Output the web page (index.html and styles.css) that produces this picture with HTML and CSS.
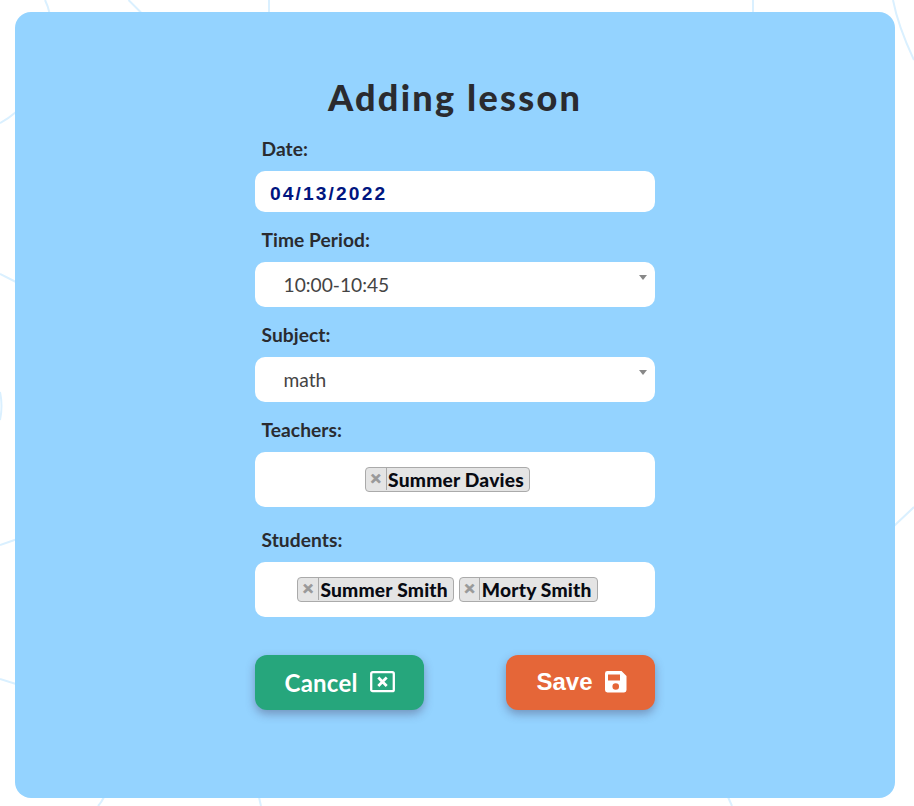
FILE: index.html
```html
<!DOCTYPE html>
<html lang="en">
<head>
<meta charset="utf-8">
<title>Adding lesson</title>
<link rel="stylesheet" href="styles.css">
</head>
<body>
<svg class="backdrop" viewBox="0 0 914 806" aria-hidden="true">
  <path d="M45 0Q48 6 49.500 13M128.500 0L141 12.500M269 0V13M753 0V13M893 0Q898 26 914 60M0 123Q8 119 16 112M0 274L16 282M0 392Q3 406 0 420M0 545L16 539.500M0 679L16 684M98 806Q101 803 104 797M259 797Q260 802 261 806M728 797L732 806M894 526L914 507"/>
</svg>
<main class="card">
  <form class="lesson-form">
    <h1 class="title">Adding lesson</h1>
    <div class="label">Date:</div>
    <div class="field date">04/13/2022</div>
    <div class="label">Time Period:</div>
    <div class="field select"><span>10:00-10:45</span><i class="arrow"></i></div>
    <div class="label">Subject:</div>
    <div class="field select"><span>math</span><i class="arrow"></i></div>
    <div class="label">Teachers:</div>
    <div class="field tags">
      <span class="tag"><b class="remove">×</b><span class="name">Summer Davies</span></span>
    </div>
    <div class="label label-students">Students:</div>
    <div class="field tags tags-students">
      <span class="tag"><b class="remove">×</b><span class="name">Summer Smith</span></span>
      <span class="tag"><b class="remove">×</b><span class="name">Morty Smith</span></span>
    </div>
    <div class="actions">
      <button type="button" class="button cancel"><span>Cancel</span>
        <svg width="25" height="22" viewBox="0 0 25 22"><rect x="1.200" y="1.200" width="22.600" height="19" rx="1.500" fill="none" stroke="#fff" stroke-width="2.300"/><path d="M8.300 6.500L16.700 14.900M16.700 6.500L8.300 14.900" fill="none" stroke="#fff" stroke-width="2.800"/></svg>
      </button>
      <button type="button" class="button save"><span>Save</span>
        <svg width="22" height="22" viewBox="0 0 22 22"><path fill="#fff" fill-rule="evenodd" d="M2.400 0H16.500L21.500 5V19.100Q21.500 21.500 19.100 21.500H2.400Q0 21.500 0 19.100V2.400Q0 0 2.400 0ZM3 3.500V9.500H15V3.500ZM10.750 12.200A3.300 3.300 0 1 0 10.750 18.800A3.300 3.300 0 1 0 10.750 12.200Z"/></svg>
      </button>
    </div>
  </form>
</main>
</body>
</html>
```

FILE: styles.css
```css
* { box-sizing: border-box; }
body {
  margin: 0;
  padding: 12px 19px 8px 15px;
  height: 806px;
  overflow: hidden;
  background: #fff;
  font-family: Lato, sans-serif;
  color: #2a2b30;
}
.backdrop {
  position: absolute;
  inset: 0;
  width: 914px;
  height: 806px;
  z-index: -1;
  fill: none;
  stroke: #daf0ff;
  stroke-width: 2;
}
.card {
  height: 786px;
  border-radius: 16px;
  background: #94d3ff;
  display: flex;
  justify-content: center;
}
.lesson-form { width: 400px; padding-top: 63px; }
.title {
  margin: 0;
  height: 46px;
  font-size: 36px;
  line-height: 45px;
  font-weight: 900;
  letter-spacing: 2.25px;
  text-align: center;
  white-space: nowrap;
}
.label {
  height: 50px;
  padding: 14px 0 0 6.5px;
  font-size: 19.2px;
  line-height: 28px;
  font-weight: 700;
  letter-spacing: .06px;
}
.label-students { height: 55px; padding-top: 19px; }
.field { border-radius: 10px; background: #fff; }
.date {
  height: 41px;
  padding: 2px 15px 0;
  font: 700 19.2px/41px "Liberation Sans", sans-serif;
  letter-spacing: 2.12px;
  color: #00157f;
}
.select {
  display: flex;
  justify-content: space-between;
  height: 45px;
  padding: 0 8px 0 28.5px;
  font-size: 19.2px;
  line-height: 46px;
  color: #444;
}
.arrow {
  width: 8px;
  height: 5px;
  margin-top: 13px;
  background: #888;
  clip-path: polygon(0 0, 100% 0, 50% 100%);
}
.tags {
  display: flex;
  justify-content: center;
  gap: 5px;
  height: 55px;
  padding: 15px 15px 15px 0;
}
.tag {
  display: flex;
  height: 25px;
  border: 1px solid #aaa;
  border-radius: 4px;
  background: #e4e4e4;
  color: #080a12;
  font-size: 19.2px;
  line-height: 24px;
  font-weight: 900;
  letter-spacing: .2px;
}
.remove {
  width: 20.5px;
  height: 22px;
  border-right: 1px solid #aaa;
  color: #999;
  font-size: 19.2px;
  font-weight: 900;
  line-height: 19px;
  text-align: center;
  -webkit-text-stroke: .6px #999;
}
.name { padding: 0 5px 0 1.5px; white-space: nowrap; }
.actions {
  display: flex;
  justify-content: space-between;
  margin-top: 38px;
}
.button {
  display: flex;
  align-items: center;
  gap: 12px;
  height: 55px;
  padding: 0 29.5px;
  border: 0;
  border-radius: 12px;
  color: #fff;
  font: 700 24px/30px Lato, sans-serif;
  box-shadow: 0 4px 10px rgba(65, 55, 90, .4);
}
.button svg { flex: none; margin-top: -1px; }
.cancel { width: 169px; background: #26a67c; letter-spacing: .25px; }
.save { width: 149px; padding: 0 29px 2px 30.5px; background: #e56638; font-family: "Liberation Sans", sans-serif; }
.save svg { margin-top: 1px; }
```
